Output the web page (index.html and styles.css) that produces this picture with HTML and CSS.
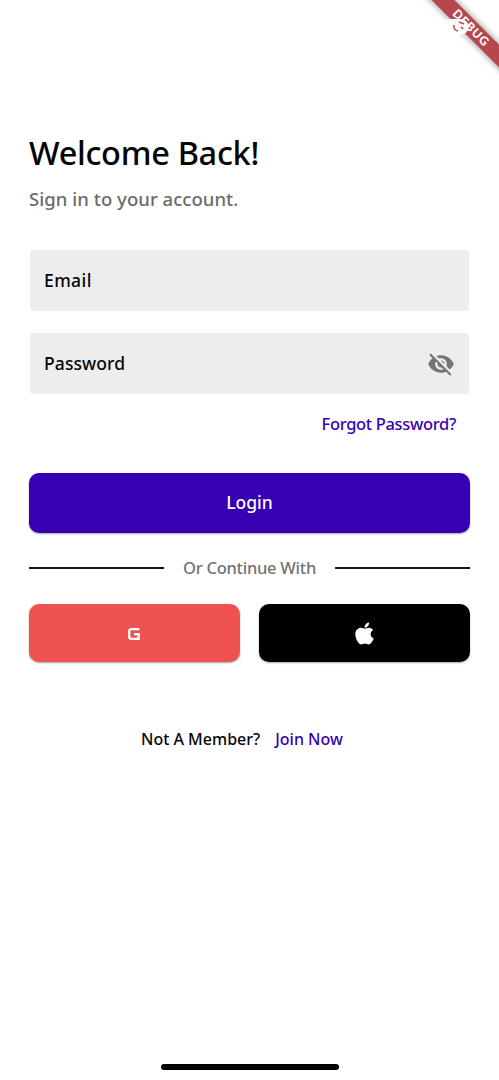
FILE: index.html
```html
<!DOCTYPE html>
<html lang="en">
<head>
<meta charset="utf-8">
<title>Login</title>
<link rel="stylesheet" href="styles.css">
</head>
<body>
<div class="screen">
  <main class="content">
    <h1 class="title"><span>Welcome Back!</span></h1>
    <p class="subtitle"><span>Sign in to your account.</span></p>
    <div class="field"><span class="email">Email</span></div>
    <div class="field"><span class="password">Password</span>
      <svg class="eye" viewBox="0 0 24 24"><path d="M12 7c2.76 0 5 2.24 5 5 0 .65-.13 1.26-.36 1.83l2.92 2.92c1.51-1.26 2.7-2.89 3.43-4.75-1.73-4.39-6-7.5-11-7.5-1.4 0-2.74.25-3.98.7l2.16 2.16C10.74 7.13 11.35 7 12 7zM2 4.27l2.28 2.28.46.46C3.08 8.3 1.78 10.02 1 12c1.73 4.39 6 7.5 11 7.5 1.55 0 3.03-.3 4.38-.84l.42.42L19.73 22 21 20.73 3.27 3 2 4.27zM7.53 9.8l1.55 1.55c-.05.21-.08.43-.08.65 0 1.66 1.34 3 3 3 .22 0 .44-.03.65-.08l1.55 1.55c-.67.33-1.41.53-2.2.53-2.76 0-5-2.24-5-5 0-.79.2-1.53.53-2.2zm4.31-.78l3.15 3.15.02-.16c0-1.66-1.34-3-3-3l-.17.01z"/></svg>
    </div>
    <a class="forgot">Forgot Password?</a>
    <div class="button login"><span>Login</span></div>
    <div class="divider"><i class="line"></i><span class="or">Or Continue With</span><i class="line"></i></div>
    <div class="social">
      <div class="button google"><svg class="g" viewBox="0 0 12 12"><path d="M11.2 1.2H3.2Q1.2 1.2 1.2 3.2V8.8Q1.2 10.8 3.2 10.8H10.6V6.1H6.2"/></svg></div>
      <div class="button apple"><svg class="apple-icon" viewBox="0 0 384 512"><path d="M318.7 268.7c-.2-36.7 16.4-64.4 50-84.8-18.8-26.9-47.2-41.7-84.7-44.6-35.5-2.8-74.3 20.7-88.5 20.7-15 0-49.4-19.7-76.4-19.7C63.3 141.2 4 184.8 4 273.5q0 39.3 14.4 81.2c12.8 36.7 59 126.7 107.2 125.2 25.2-.6 43-17.9 75.8-17.9 31.8 0 48.3 17.9 76.4 17.9 48.6-.7 90.4-82.5 102.6-119.3-65.2-30.7-61.7-90-61.7-91.9zm-56.6-164.2c27.3-32.4 24.8-61.9 24-72.5-24.1 1.4-52 16.4-67.9 34.9-17.5 19.8-27.8 44.3-25.6 71.9 26.1 2 49.9-11.4 69.5-34.3z"/></svg></div>
    </div>
    <p class="join"><span class="member">Not A Member?</span><a class="now">Join Now</a></p>
  </main>
  <div class="home"></div>
  <div class="corner">
    <div class="banner">DEBUG</div>
    <svg class="battery" viewBox="0 0 30 18"><path d="M5 1H18Q26 3 26 9Q25 16 17 17H5Q0 16 0 9Q0 1 5 1Z" fill="#fff"/><path d="M11 7q-1 5 4 6M16 4l5 2M18 9l2 2" fill="none" stroke="#b7474f" stroke-width="1.6"/></svg>
  </div>
</div>
</body>
</html>
```
FILE: styles.css
```css
* { box-sizing: border-box; }
body { margin: 0; background: #fff; color: #050505; font-family: "Noto Sans", sans-serif; font-weight: 500; }
.screen { position: relative; height: 1080px; overflow: hidden; display: flex; flex-direction: column; justify-content: space-between; align-items: center; }
.content { width: 100%; padding: 130px 29px 0; display: flex; flex-direction: column; }
h1, p { margin: 0; white-space: nowrap; }
.title { font-size: 32.5px; font-weight: 500; line-height: 46px; height: 46px; letter-spacing: -.3px; }
.subtitle { margin-top: 9px; font-size: 18.5px; line-height: 27px; height: 28px; letter-spacing: .04px; color: #6b6b6b; }
.field { display: flex; align-items: center; justify-content: space-between; height: 61px; margin: 37px 1px 0; padding: 0 14px; background: #ededed; border-radius: 3px; font-size: 17.5px; }
.field + .field { margin-top: 22px; }
.email, .password, .login span { padding-bottom: 2px; }
.email { letter-spacing: .4px; }
.password { letter-spacing: .1px; }
.eye { width: 28px; height: 28px; fill: #757575; }
.forgot { align-self: flex-end; margin: 18px 14px 0 0; font-size: 16.5px; line-height: 24px; letter-spacing: -.33px; color: #3700b3; }
.button { display: flex; align-items: center; justify-content: center; border-radius: 10px; box-shadow: 0 1px 2px rgba(0,0,0,.35); }
.login { margin-top: 37px; height: 60px; background: #3700b3; color: #fff; font-size: 17.5px; }
.divider { margin-top: 23px; height: 24px; display: flex; align-items: center; justify-content: space-between; font-size: 16.5px; letter-spacing: -.25px; color: #737373; }
.or { padding-bottom: 1px; }
.line { width: 135px; height: 1.5px; background: #151515; }
.social { margin-top: 24px; display: flex; gap: 19px; }
.social .button { flex: 1; height: 58px; }
.google { background: #ef5350; }
.apple { background: #000; }
.g { width: 12px; height: 12px; fill: none; stroke: #fff; stroke-width: 2.3; margin: 1px 2px 0 0; }
.apple-icon { width: 19px; height: 25px; fill: #fff; }
.join { margin: 65px 0 0 112px; display: flex; gap: 15px; font-size: 16px; line-height: 24px; }
.now { color: #3700b3; }
.home { width: 178px; height: 6px; margin-bottom: 10px; border-radius: 3px; background: #000; }
.corner { position: absolute; top: 0; right: 0; width: 100px; height: 100px; overflow: hidden; }
.banner { position: absolute; left: -8px; top: 20px; width: 160px; height: 16px; transform: rotate(45deg); background: #b7474f; box-shadow: 0 0 7px rgba(0,0,0,.5); color: #fff; text-align: center; font: 900 12px/16px Lato, sans-serif; letter-spacing: 1px; }
.battery { position: absolute; left: 44px; top: 18px; width: 30px; height: 18px; opacity: .95; }
```
